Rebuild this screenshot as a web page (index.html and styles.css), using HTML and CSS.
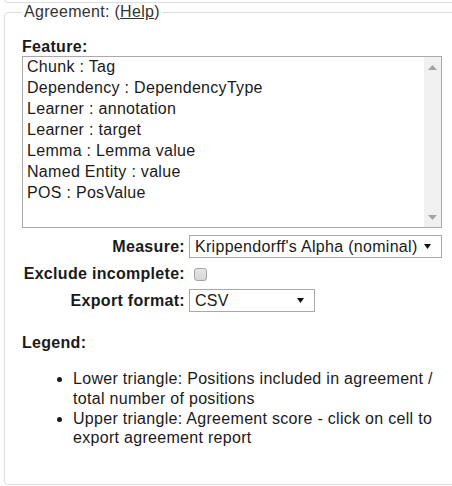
FILE: index.html
```html
<!DOCTYPE html>
<html lang="en">
<head>
<meta charset="utf-8">
<title>Agreement</title>
<link rel="stylesheet" href="styles.css">
</head>
<body>
<div class="prev-panel"></div>
<fieldset class="panel">
  <legend class="panel-legend">Agreement: (<a class="help-link" href="#">Help</a>)</legend>
  <div class="field-label">Feature:</div>
  <div class="listbox" role="listbox">
    <div class="options">
      <div class="option" role="option">Chunk : Tag</div>
      <div class="option" role="option">Dependency : DependencyType</div>
      <div class="option" role="option">Learner : annotation</div>
      <div class="option" role="option">Learner : target</div>
      <div class="option" role="option">Lemma : Lemma value</div>
      <div class="option" role="option">Named Entity : value</div>
      <div class="option" role="option">POS : PosValue</div>
    </div>
    <div class="scrollbar">
      <svg class="sb-arrow" width="9" height="5" viewBox="0 0 9 5"><path d="M0 5 L4.5 0 L9 5 Z" fill="#a3a3a3"/></svg>
      <svg class="sb-arrow" width="9" height="5" viewBox="0 0 9 5"><path d="M0 0 L4.5 5 L9 0 Z" fill="#a3a3a3"/></svg>
    </div>
  </div>
  <div class="form-grid">
    <label class="row-label" for="measure">Measure:</label>
    <div class="select-wrap select-wide">
      <select id="measure" class="select"><option>Krippendorff's Alpha (nominal)</option></select>
      <svg class="caret" width="7" height="5" viewBox="0 0 7 5"><path d="M0 0 L7 0 L3.5 5 Z" fill="#111"/></svg>
    </div>
    <label class="row-label" for="exclude">Exclude incomplete:</label>
    <div class="check-cell"><input id="exclude" class="check" type="checkbox"></div>
    <label class="row-label" for="format">Export format:</label>
    <div class="select-wrap select-narrow">
      <select id="format" class="select"><option>CSV</option></select>
      <svg class="caret" width="7" height="5" viewBox="0 0 7 5"><path d="M0 0 L7 0 L3.5 5 Z" fill="#111"/></svg>
    </div>
  </div>
  <div class="legend-title">Legend:</div>
  <ul class="legend-list">
    <li>Lower triangle: Positions included in agreement / total number of positions</li>
    <li>Upper triangle: Agreement score - click on cell to export agreement report</li>
  </ul>
</fieldset>
</body>
</html>
```
FILE: styles.css
```css
html, body {
  overflow: hidden;
}
body {
  margin: 0;
  font-family: "Liberation Sans", Arial, sans-serif;
  font-size: 16px;
  letter-spacing: 0.3px;
  color: #1a1a1a;
  background: #fff;
}
.prev-panel {
  margin: -10px -20px 0 4px;
  height: 11px;
  border: 1px solid #dddddd;
  border-radius: 4px;
}
.panel {
  margin: 0 -20px 0 4px;
  padding: 17px 0 36px 17px;
  border: 1px solid #dddddd;
  border-radius: 4px;
  min-width: 0;
}
.panel-legend {
  padding: 0 2px;
  margin-left: 0;
  font-size: 16px;
  color: #333;
}
.help-link {
  color: inherit;
  text-decoration: underline;
}
.field-label {
  font-weight: bold;
}
.listbox {
  box-sizing: border-box;
  width: 420px;
  height: 172px;
  border: 1px solid #a9a9a9;
  display: flex;
  background: #fff;
}
.options {
  flex: 1;
  padding-left: 4px;
}
.option {
  height: 21px;
  line-height: 20px;
  white-space: nowrap;
}
.scrollbar {
  width: 17px;
  background: #f0f0f0;
  display: flex;
  flex-direction: column;
  justify-content: space-between;
  align-items: center;
  padding: 8px 0 7px;
  box-sizing: border-box;
}
.sb-arrow {
  display: block;
}
.form-grid {
  display: grid;
  grid-template-columns: 163px auto;
  grid-auto-rows: 23px;
  column-gap: 4px;
  row-gap: 4px;
  align-items: center;
  margin-top: 7px;
  width: 420px;
}
.row-label {
  font-weight: bold;
  text-align: right;
  white-space: nowrap;
}
.select-wrap {
  position: relative;
  height: 23px;
}
.select-wide {
  width: 253px;
}
.select-narrow {
  width: 126px;
}
.select {
  appearance: none;
  -webkit-appearance: none;
  box-sizing: border-box;
  width: 100%;
  height: 23px;
  margin: 0;
  padding: 0 20px 0 5px;
  border: 1px solid #a9a9a9;
  border-radius: 0;
  background: #fff;
  font: inherit;
  letter-spacing: inherit;
  color: inherit;
}
.caret {
  position: absolute;
  right: 11px;
  top: 9px;
  pointer-events: none;
}
.check-cell {
  display: flex;
  align-items: center;
}
.check {
  appearance: none;
  -webkit-appearance: none;
  box-sizing: border-box;
  width: 13px;
  height: 13px;
  margin: 1px 0 0 5px;
  border: 1px solid #a6a6a6;
  border-radius: 3px;
  background: linear-gradient(#e6e6e6, #d6d6d6);
}
.legend-title {
  font-weight: bold;
  margin-top: 22px;
}
.legend-list {
  box-sizing: border-box;
  width: 420px;
  margin: 17px 0 0;
  padding-left: 51px;
  line-height: 19.8px;
}
```
